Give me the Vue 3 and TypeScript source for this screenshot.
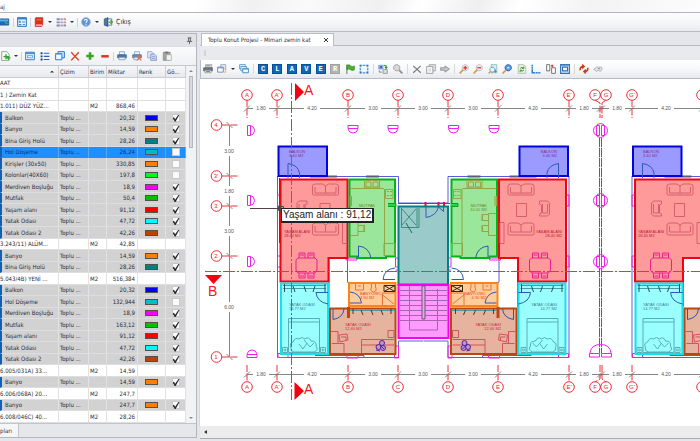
<script setup lang="ts">
import { ref } from 'vue'

type Shape = [d: string, fill?: string, stroke?: string, width?: number]

interface Row {
  name: string
  amount?: string
  color?: string
  on?: boolean
  unit?: string
}

const icons: Record<string, Shape[]> = {
  monitor: [['M-6 3H14V13H-6Z', '#1c6db8', '#174f86'], ['M-6 4H13V7H-6Z', '#5fb0e6'], ['M8 8L12 11', 'none', '#5cba3c', 2]],
  app: [['M1 1H15V15H1Z', '#e6f1fb', '#2f77b8', 1.6], ['M1 1H15V4H1Z', '#3a86c8'], ['M3 6H6V9H3Z M3 11H7V13H3Z', '#3a86c8'], ['M8 8H13M9 12H13', 'none', '#3a86c8', 1.4]],
  book: [['M3 1H14V12L12 15H2V2Z', '#dc2f17', '#a81f10'], ['M3 12H13V14H3Z', '#f5d9d0'], ['M4 3H12V6H4Z', '#f0563a']],
  grid: [['M1 2H6V5H1Z M1 7H6V10H1Z M1 12H6V15H1Z', '#7d8bb5'], ['M7 2H11V5H7Z M7 7H11V10H7Z M7 12H11V15H7Z', '#b3a3bf'], ['M12 2H16V5H12Z M12 7H16V10H12Z', '#cf8e94'], ['M12 12H16V15H12Z', '#7d8bb5']],
  help: [['M8 1A7 7 0 1 1 7.9 1Z', '#5b93d6', '#9fb9dc', 1.4], ['M5.5 6Q6 3.5 8.5 4Q11 5 9 7.5Q8 8.500 8 10M8 11.500V13', 'none', '#fff', 1.8]],
  door: [['M2 3L8 1V15L2 13Z', '#54759f', '#2b4768'], ['M8 3H14V13H8Z', '#fff', '#3f5f85', 1.2], ['M9 8H15M12 5L15 8L12 11', 'none', '#3fa535', 2]],
  addDoc: [['M1 1H9L13 5V15H1Z', '#f4faf4', '#6d9c74', 1.2], ['M8 5V13M4 9H12M9 11H15M12 8V14', 'none', '#35a335', 2.2]],
  window: [['M1 2H15V14H1Z', '#f7fbff', '#3e7cc0', 1.6], ['M1 2H15V5H1Z', '#4f8fd0'], ['M4 7H12V11H4Z', '#dcebfa', '#3e7cc0', 1]],
  list: [['M1 2H4V5H1Z M1 7H4V10H1Z M1 12H4V15H1Z', '#1d3f73'], ['M6 3.500H15M6 8.500H15M6 13.500H15', 'none', '#2e66ad', 1.8]],
  copies: [['M5 1H15V11H5Z', '#cfe5fa', '#2d7cc9', 1.6], ['M1 4H11V14H1Z', '#f6fbff', '#2d7cc9', 1.6], ['M1 4H11V6H1Z', '#5ea3e0']],
  cross: [['M2 2L14 15M14 2L2 15', 'none', '#df3a1d', 2.2]],
  plus: [['M8 2V14M2 8H14', 'none', '#36a51e', 4]],
  minus: [['M2 8.500H14', 'none', '#d43a26', 4]],
  print: [['M4 1H12V6H4Z', '#eaf1f8', '#6d87a8'], ['M1 6H15V11H1Z', '#4678ae', '#315b8c'], ['M3 10H13V14H3Z', '#e8f1fa', '#5f81a8']],
  printX: [['M4 1H12V6H4Z', '#eaf1f8', '#7d92ad'], ['M1 6H15V11H1Z', '#6c8cae', '#4b6888'], ['M3 10H10V14H3Z', '#e8f1fa', '#6d87a8'], ['M8 8L15 15M15 8L8 15', 'none', '#e06a55', 2]],
  docs: [['M1 1H8L10 3V11H1Z', '#dfe6f5', '#8da1ce', 1.2], ['M6 5H12L15 8V15H6Z', '#d1dcf4', '#7188c0', 1.2], ['M8 9H13M8 12H13', 'none', '#7188c0', 1]],
  paste: [['M2 2H13V15H2Z', '#a6a29d', '#7e7a76'], ['M5 1H10V4H5Z', '#777'], ['M7 6H15V15H7Z', '#f2f2f2', '#a2a2a2']],
  printer: [['M4 1H14V6H4Z', '#e9edf0', '#888'], ['M1 6H15V11H1Z', '#6f7a86', '#454e58'], ['M3 10H13V14H3Z', '#f3f3f3', '#777'], ['M5 3H12M5 12H11', 'none', '#444', 1]],
  views: [['M6 1H14V8H6Z', '#e3eaf3', '#8b9cb6', 1.2], ['M1 5H10V13H1Z', '#fafcff', '#6b84ac', 1.4], ['M1 5H10V7H1Z', '#7f9ac6'], ['M14 8V13H11', 'none', '#e0b168', 1.4]],
  cascade: [['M1 1H10V8H1Z', '#eaf5ff', '#4b9ad6', 1.4], ['M3 4H12V11H3Z', '#eaf5ff', '#4b9ad6', 1.4], ['M6 7H15V14H6Z', '#fff', '#2c80c4', 1.4], ['M6 7H15V9H6Z', '#55a2dc']],
  flag: [['M3 1V16', 'none', '#5c7a4a', 1.6], ['M3 2Q7 0 9 3Q12 5 15 3V9Q12 12 9 9Q6 7 3 9Z', '#48b02c', '#2c861b']],
  marquee: [['M2 2H14V14H2Z', '#eef6ff', '#75b4e8'], ['M1 1H4V4H1Z M12 1H15V4H12Z M1 12H4V15H1Z M12 12H15V15H12Z M7 1H9V3H7Z M7 13H9V15H7Z M1 7H3V9H1Z M13 7H15V9H13Z', '#2474bf']],
  replace: [['M1 2H8V8H1Z', '#9cbcf0', '#6e92d4'], ['M3 7L5 3L6 7', 'none', '#1a3e91', 1.2], ['M9 2L13 3V6M11 5L13 7L15 5', 'none', '#2f9a2f', 2], ['M8 9H15V15H8Z', '#dedede', '#777'], ['M2 10V13H6', 'none', '#666', 1.2]],
  lens: [['M6 1A5 5 0 1 1 5.900 1Z', '#d9d9d9', '#a2a2a2', 1.6], ['M10 10L15 15', 'none', '#929292', 3]],
  cut: [['M2 3L14 14M14 3L2 14', 'none', '#787878', 1.8]],
  cube: [['M5 1H15V11H5Z', '#e5e5e5', '#989898', 1.2], ['M1 4H11V15H1Z', '#f6f6f6', '#989898', 1.4], ['M4 7H8V12H4Z', '#ddd']],
  arrow: [['M1 6H8V3L15 8L8 13V10H1Z', '#c9c9c9', '#7f7f7f', 1.2]],
  zoomIn: [['M10 1A5 5 0 1 1 9.900 1Z', '#eaeaf0', '#b4b2ba', 1.2], ['M7 9L1 15', 'none', '#cf9b4c', 2.600], ['M10 3V9M7 6H13', 'none', '#d1371e', 2]],
  zoomOut: [['M10 1A5 5 0 1 1 9.900 1Z', '#eaeaf0', '#b4b2ba', 1.2], ['M7 9L1 15', 'none', '#cf9b4c', 2.600], ['M7 6H13', 'none', '#d1371e', 2]],
  zoomPage: [['M5 1H14V14H5Z', '#dbeef2', '#7fb0bb', 1.2], ['M7 5A4 4 0 1 1 6.900 5Z', '#e9f5ff', '#5b92b4', 1.4], ['M4 12L1 15', 'none', '#d0a04e', 2.400], ['M12 9V14M10 12H14', 'none', '#4f9e47', 1.4]],
  zoomFit: [['M10 1A5 5 0 1 1 9.900 1Z', '#5b9ae0', '#2861ac', 1.6], ['M6 10L1 15', 'none', '#cf9b4c', 2.800], ['M8 5H12V7H8Z', '#d9edff']],
  refresh: [['M2 1H10L14 4V15H2Z', '#e8f1e6', '#a6b5a3', 1.2], ['M5 7Q8 4 11 7M11 4V7H8M11 10Q8 13 5 10M5 13V10H8', 'none', '#3aa132', 1.6]],
  axes: [['M2 1V14H15', 'none', '#337fc8', 2.400], ['M1 4H4M1 8H4M7 12V15M11 12V15', 'none', '#fff', 1]],
  swap: [['M1 1H6V11H1Z', '#fff', '#666', 1.4], ['M9 6H15V15H9Z', '#fff', '#666', 1.4], ['M8 3H12M10 1V5', 'none', '#d9392d', 1.8]],
  frame: [['M1 1H15V15H1Z', '#e3f0ff', '#2c6fb8', 1.8], ['M4 5H12V11H4Z', '#fff', '#2c6fb8', 1.8], ['M1 1H15V3H1Z', '#5793d2']],
  turn: [['M2 10Q1 4 7 4M5 1L8 4L5 7', 'none', '#cc3d12', 2.600], ['M14 6Q15 12 9 12M11 9L8 12L11 15', 'none', '#cc3d12', 2.600]],
  hand: [['M1 8L6 5L14 5Q16 8 12 12L8 10L5 12Z', '#e4e4e4', '#a5a5a5', 1.2], ['M8 7.500H11', 'none', '#888', 1.6]]
}

const mainTools = ['monitor', 'app', 'book', 'grid', 'help']
const tableTools = [['addDoc'], ['window', 'list', 'copies', 'cross', 'plus', 'minus'], ['print', 'printX', 'docs', 'paste']]
const planTools = [
  ['printer', 'views', 'cascade'],
  ['#C', '#L', '#A', '#V', '#E', '#R', 'flag', 'marquee'],
  ['replace', 'lens'],
  ['cut', 'cube', 'arrow'],
  ['zoomIn', 'zoomOut', 'zoomPage', 'zoomFit', 'refresh', 'axes', 'swap', 'frame'],
  ['turn', 'hand']
]

const item = (name: string, amount: string, color: string, on = true): Row => ({ name, amount, color, on })
const rows = ref<Row[]>([
  { name: 'AAT' },
  { name: '1 ) Zemin Kat' },
  { name: '1.011) DÜZ YÜZ...', unit: 'M2', amount: '868,46' },
  item('Balkon', '20,32', '#0000f0'),
  item('Banyo', '14,59', '#ff8000'),
  item('Bina Giriş Holü', '28,26', '#008080'),
  item('Hol Döşeme', '26,24', '#00b8c0', false),
  item('Kirişler (30x50)', '330,85', '#ff8000', false),
  item('Kolonlar(40X60)', '197,8', '#00f818', false),
  item('Merdiven Boşluğu', '18,9', '#f800f8'),
  item('Mutfak', '50,4', '#00c000'),
  item('Yaşam alanı', '91,12', '#fa0000'),
  item('Yatak Odası', '47,72', '#00f8ff'),
  item('Yatak Odası 2', '42,26', '#bd4200'),
  { name: '3.243/11) ALÜM...', unit: 'M2', amount: '42,85' },
  item('Banyo', '14,59', '#ff8000'),
  item('Bina Giriş Holü', '28,26', '#008080'),
  { name: '5.043/4B) YENİ ...', unit: 'M2', amount: '516,384' },
  item('Balkon', '20,32', '#0000f0'),
  item('Hol Döşeme', '132,944', '#00c0c0', false),
  item('Merdiven Boşluğu', '18,9', '#f800f8'),
  item('Mutfak', '163,12', '#00c000'),
  item('Yaşam alanı', '91,12', '#fa0000'),
  item('Yatak Odası', '47,72', '#00f8ff'),
  item('Yatak Odası 2', '42,26', '#bd4200'),
  { name: '6.005/031A) 33...', unit: 'M2', amount: '14,59' },
  item('Banyo', '14,59', '#ff8000'),
  { name: '6.006/068A) 20...', unit: 'M2', amount: '247,7' },
  item('Banyo', '247,7', '#ff8000'),
  { name: '6.008/046C) 40...', unit: 'M2', amount: '28,26' }
])
const selected = ref(6)

const axes = [
  { n: 'A', x: 247, c: 247 }, { n: "A'", x: 277, c: 277 }, { n: 'B', x: 348, c: 348 },
  { n: 'C', x: 398, c: 398 }, { n: 'D', x: 448, c: 448 }, { n: 'E', x: 498, c: 498 },
  { n: "E'", x: 569, c: 569 }, { n: 'F', x: 600, c: 595 }, { n: 'G', x: 602, c: 606 },
  { n: "G'", x: 632, c: 632 }, { n: '', x: 702, c: 702 }
]
const spans = [
  { x: 261, t: '1.80' }, { x: 312, t: '4.20' }, { x: 373, t: '3.00' }, { x: 423, t: '3.00' }, { x: 473, t: '3.00' },
  { x: 533, t: '4.20' }, { x: 584, t: '1.80' }, { x: 617, t: '1.80' }, { x: 666, t: '4.20' }
]
const levels = [{ n: '4', y: 125 }, { n: "3'", y: 176 }, { n: '3', y: 206 }, { n: '2', y: 256 }, { n: '1', y: 357 }]
const rises = [{ y: 151, t: '3.00' }, { y: 191, t: '1.80' }, { y: 231, t: '3.00' }, { y: 307, t: '6.00' }]

const units = ['', 'translate(846.5 0) scale(-1 1)', 'translate(354.5 0)']
const rooms = [
  { a: 'BALKON', b: '3.40 M2', x: 289, y: 153, c: '#8a2a90' },
  { a: 'YAŞAM ALANI', b: '28.40 M2', x: 284, y: 233, c: '#b81838' },
  { a: 'MUTFAK', b: '10.20 M2', x: 359, y: 207, c: '#6d8a20' },
  { a: 'YATAK ODASI', b: '14.77 M2', x: 289, y: 306, c: '#3b7c88' },
  { a: 'BANYO/WC', b: '4.90 M2', x: 360, y: 295, c: '#e0482c' },
  { a: 'YATAK ODASI', b: '12.40 M2', x: 345, y: 326, c: '#d02840' }
]
const roomLabels = [
  ...rooms.map(r => ({ ...r, b: r.a === 'MUTFAK' ? '' : r.b, anchor: 'start' })),
  ...rooms.map(r => ({ ...r, x: 846 - r.x, anchor: 'end' })),
  ...rooms.map(r => ({ ...r, x: r.x + 354, anchor: 'start' })).filter(r => r.x < 690)
]
</script>

<template>
  <div class="app">
    <header class="ribbon"><span>aj</span></header>
    <div class="main-tools" role="toolbar" aria-label="Proje">
      <template v-for="(t, i) in mainTools" :key="t">
        <button class="tool" type="button" :aria-label="t">
          <svg viewBox="0 0 16 16"><path v-for="(s, k) in icons[t]" :key="k" :d="s[0]" :fill="s[1]" :stroke="s[2]" :stroke-width="s[3]" /></svg>
        </button>
        <i v-if="i > 1" class="drop"></i>
        <i v-if="i !== 2 && i !== 4" class="sep"></i>
      </template>
      <button class="exit" type="button">
        <svg viewBox="0 0 16 16"><path v-for="(s, k) in icons.door" :key="k" :d="s[0]" :fill="s[1]" :stroke="s[2]" :stroke-width="s[3]" /></svg>
        Çıkış
      </button>
    </div>

    <div class="work">
      <aside class="side">
        <div class="side-head">
          <svg class="pin" viewBox="0 0 8 8"><path d="M2 1H6M3 1V5M5 1V5M1 5H7M4 5V8" fill="none" stroke="#555" /></svg>
        </div>
        <div class="side-tools" role="toolbar" aria-label="Metraj">
          <template v-for="(g, i) in tableTools" :key="i">
            <div class="group">
              <button v-for="t in g" :key="t" class="tool" type="button" :aria-label="t">
                <svg viewBox="0 0 16 16"><path v-for="(s, k) in icons[t]" :key="k" :d="s[0]" :fill="s[1]" :stroke="s[2]" :stroke-width="s[3]" /></svg>
              </button>
              <i v-if="i === 0" class="drop"></i>
            </div>
            <i v-if="i < 2" class="sep"></i>
          </template>
        </div>
        <div class="table-area">
          <table>
            <colgroup><col /><col class="c-draw" /><col class="c-unit" /><col class="c-amount" /><col class="c-color" /><col class="c-show" /></colgroup>
            <thead>
              <tr><th><span class="sort"></span></th><th>Çizim</th><th>Birim</th><th>Miktar</th><th>Renk</th><th>Gö...</th></tr>
            </thead>
            <tbody>
              <tr v-for="(r, i) in rows" :key="i" :class="{ item: r.color, selected: i === selected }" @click="selected = i">
                <td class="name">{{ r.name }}</td>
                <td>{{ r.color ? 'Toplu ...' : '' }}</td>
                <td>{{ r.unit }}</td>
                <td class="num">{{ r.amount }}</td>
                <td class="mid"><span v-if="r.color" class="swatch" :style="{ background: r.color }"></span></td>
                <td class="mid"><input v-if="r.color" v-model="r.on" type="checkbox" :aria-label="r.name" /></td>
              </tr>
            </tbody>
          </table>
          <div class="vbar"><i class="up"></i><i class="thumb"></i><i class="down"></i></div>
        </div>
        <div class="side-tabs"><button type="button">pları</button></div>
      </aside>

      <main class="doc">
        <div class="tabs">
          <div class="tab">Toplu Konut Projesi - Mimari zemin kat
            <button type="button" aria-label="Kapat"><svg viewBox="0 0 6 6"><path d="M1 1L5 5M5 1L1 5" fill="none" stroke="#333" /></svg></button>
          </div>
        </div>
        <div class="grip"><i></i></div>
        <div class="plan-tools" role="toolbar" aria-label="Çizim">
          <div v-for="(g, i) in planTools" :key="i" class="group">
            <template v-for="t in g" :key="t">
              <button v-if="t[0] === '#'" class="letter" :class="{ off: t === '#R' }" type="button">{{ t[1] }}</button>
              <button v-else class="tool" type="button" :aria-label="t">
                <svg viewBox="0 0 16 16"><path v-for="(s, k) in icons[t]" :key="k" :d="s[0]" :fill="s[1]" :stroke="s[2]" :stroke-width="s[3]" /></svg>
              </button>
              <i v-if="t === 'views'" class="drop"></i>
            </template>
          </div>
        </div>

        <div class="canvas">
          <svg class="plan" viewBox="200 79 500 347" preserveAspectRatio="xMinYMin meet">
            <!-- axis bubbles and dimension chains -->
            <g class="dim">
              <path d="M247 108.500H700M247 374.500H700M229.500 125V357" />
              <path v-for="a in axes" :key="a.n" :d="`M${a.x - 3} 111.500L${a.x + 3} 105.500M${a.x - 3} 377.500L${a.x + 3} 371.500`" />
              <path v-for="l in levels" :key="l.n" :d="`M226.500 ${l.y - 3}L232.500 ${l.y + 3}`" />
            </g>
            <g v-for="s in spans" :key="s.x" class="dim-text">
              <rect :x="s.x - 8" y="105" width="16" height="7" /><text :x="s.x" y="110">{{ s.t }}</text>
              <rect :x="s.x - 8" y="371" width="16" height="7" /><text :x="s.x" y="376">{{ s.t }}</text>
            </g>
            <g v-for="r in rises" :key="r.y" class="dim-text">
              <rect x="223" :y="r.y - 5" width="13" height="10" /><text x="229" :y="r.y + 2">{{ r.t }}</text>
            </g>
            <g v-for="a in axes" :key="a.n" class="axis">
              <path :d="`M${a.c} 100L${a.x} 103V118M${a.x} 365V379L${a.c} 382`" stroke-dasharray="7 1.500" />
              <circle :cx="a.c" cy="95" r="5.300" /><text :x="a.c" y="97">{{ a.n }}</text>
              <circle :cx="a.c" cy="387" r="5.300" /><text :x="a.c" y="389">{{ a.n }}</text>
            </g>
            <g v-for="l in levels" :key="l.n" class="axis">
              <circle cx="216.500" :cy="l.y" r="5.300" /><text x="216" :y="l.y + 2">{{ l.n }}</text>
              <path :d="`M222 ${l.y}H239`" stroke-dasharray="7 1.500" />
            </g>

            <!-- shaft between the two blocks -->
            <path d="M599.500 137V353M601.500 137V353" fill="none" stroke="#5058d0" />
            <path d="M600.500 137V353" fill="none" stroke="#fff" stroke-width="2.500" stroke-dasharray="1 9" />

            <g class="vent">
              <template v-for="y in [130.5, 200.5, 261.5]" :key="y">
                <path :d="`M247.500 ${y - 5}h3v10h-3zM250.500 ${y - 5}q4 1 4 5t-4 5`" />
                <path :d="`M596.500 ${y - 5}h3v10h-3zM601.500 ${y - 5}h3v10h-3zM596 ${y - 5}q-2.500 2-2.500 5t2.500 5M605 ${y - 5}q2.500 2 2.500 5t-2.500 5M597 ${y - 6}q3.500-2 7 0M597 ${y + 6}q3.500 2 7 0`" />
              </template>
              <path v-for="x in [353, 393, 453.5, 494]" :key="x" :d="`M${x - 5} 125.500h10v3h-10zM${x - 5} 129q1 4 5 4t5-4`" />
              <path d="M247 354.500h10v3h-10zM247 354q1-4 5-4t5 4" />
              <path d="M589.500 353.500h10v3.500h-10zM601.500 353.500h10v3.500h-10zM590 353Q591 344.500 600.500 344.500T611 353" />
            </g>

            <!-- apartment, drawn once and repeated -->
            <g v-for="(u, i) in units" :key="i" :transform="u">
              <path class="wall" d="M277.500 176V357.500H398.500V341H423M327 176.500H398.500V203H423M347.500 282V259M329 259V307M347.500 282.500H396M315 355.500H364V358" />
              <path d="M310 176.500H337M366 176.500H379" stroke="#5b5b78" stroke-width="2" />
              <path class="vent-line" d="M277.500 195h3v11h-3zM277.500 256h3v11h-3zM278 353.500h10v4h-10zM347 354h11v4h-11zM394.500 346h4v12h-4zM395.500 258h3v9h-3zM346 258h11v2h-11zM395.500 270h3v10" />

              <rect x="278.500" y="146.500" width="48.500" height="29.500" fill="#9a9aff" stroke="#0004e0" stroke-width="2" />
              <path d="M280.500 179.500H347.500V258H328.500V281.500H280.500Z" fill="#ff9a9a" stroke="#ee0514" stroke-width="2" />
              <path d="M349.500 179.500H395V256.500H386V258H357V256.500H349.500Z" fill="#9ae69a" stroke="#00b41a" stroke-width="2" />
              <rect x="281" y="283.500" width="47" height="70.500" fill="#9affff" stroke="#12dff0" stroke-width="2" />
              <rect x="349" y="283" width="46.500" height="23" fill="#ffcc9a" stroke="#ff8412" stroke-width="2" />
              <rect x="330" y="308.500" width="65.500" height="45.500" fill="#e5b39e" stroke="#b84810" stroke-width="2" />
              <path d="M347 307h3v11h-3z" fill="#b84810" />

              <g class="doors">
                <path d="M288 178V163.500Q298 165 299.500 173V178" />
                <path d="M358.500 257V246Q369 247 371 258" />
                <path d="M383 279.500H395M383 279.500Q384 269 395 268" />
                <path d="M316 292.500H328M316 292.500Q317 302 328 304" />
                <path d="M350 303H361.500Q360 293 350 292" />
                <path d="M333 309V319.500Q343 318 344 309" />
              </g>

              <g class="soft">
                <path d="M312.500 186q0-2 3-2h7l3 2 3-2h7q3 0 3 2v8q0 1-2 1h-22q-2 0-2-1zM315 187v6h21v-6M325.500 186v7M312.500 225q0-2 3-2h7l3 2 3-2h7q3 0 3 2v9q0 1-2 1h-22q-2 0-2-1zM315 226v6h21v-6M325.500 225v7" />
                <path d="M320 203.500h10v13h-10zM297 203l2-2h8v3l-2 1v8l2 1v2h-8l-2-2zM299 204v9h5v-9M342.500 222.500h4v21h-4z" />
              </g>
              <g class="pink">
                <path d="M298 258h17l2 2v10l-2 3h-17l-2-3v-10zM299 258v-5h6v5M308 258v-5h6v5M299 273v5h6v-5M308 273v5h6v-5M300 255h4M309 255h4M300 276h4M309 276h4" />
              </g>
              <g class="counter">
                <path d="M384.500 189V255M350 188.500H384M364.500 180.500h15v7.500h-15zM366 182h5v5h-5zM373 182h5v5h-5zM385.500 189.500h7.500v9h-7.500zM384 243.500h11v12h-11z" />
                <path d="M387 191.500h2M390 191.500h2M387 195.500h2M390 195.500h2" />
                <path d="M350 213.500h8v22h-8M358 214.500h6v6h-6M358 225.500h6v6h-6M364.500 214v7M364.500 225v7" stroke="#8240a0" />
                <path d="M350 196v10M351.500 196v10" stroke="#5d608f" />
              </g>
              <g class="bath">
                <path d="M355.500 284v6h8v-6M358 286h3M371.500 284v3q-2 4 2 5 4-1 2-5v-3M382.500 295L394 304M382.500 293h12M382.500 293v12" />
                <path d="M384 285.500h11v6h-11zM384 285.500l11 6M395 285.500l-11 6" class="ink" />
              </g>
              <g class="wardrobe">
                <path d="M283 285.500H326M283 288.500H326M350 310.500H395" />
                <path class="hanger" d="M284.500 284v8M293 286l2 6M304 286l2 6M315 286l-2 6M325 284v8" />
                <path class="hanger brown" d="M353 309v5M361 310l2 5M371 310l2 5M381 310l2 5M391 309v5" />
              </g>
              <g class="bed">
                <path d="M288.500 318.500h31v34h-31zM288.500 322h31M291 348q-2-5 2-6 2-5 6-3 3-3 6 0 4-3 6 2 6 0 5 5 3 4-2 6h-20q-4-1-3-4M299 344l4 5 4-6M304 340l6 7 4-4M282.500 347.500h5v5h-5zM320.500 347.500h5v5h-5z" />
                <circle cx="285" cy="350" r="1" /><circle cx="323" cy="350" r="1" />
              </g>
              <g class="study">
                <path d="M331 331.500h7v12M339 335l8-1 1 6-8 2zM341 337h5v3M332 343.500h12v10M361.500 353V339.500H394M361.500 345H394M388 330.500h6v7h-6z" />
                <g stroke="#5a20a0" fill="#b89acb"><circle cx="382" cy="343" r="2.500" /><circle cx="378.500" cy="347" r="2.500" /><circle cx="383" cy="348" r="2.500" /><path d="M376 350l4 1M380 345l4 4" /></g>
              </g>
            </g>

            <!-- shared hall and stairs -->
            <rect x="398.500" y="206.500" width="49.500" height="78" fill="#9acaca" stroke="#077e82" stroke-width="2" />
            <rect x="398.500" y="285" width="50" height="53" fill="#ff9aff" stroke="#f500f5" stroke-width="2" />
            <path d="M400 290.500H447M400 295.500H447M400 300.500H447M400 305.500H447M400 310.500H447M400 315.500H447M400 320.500H447M409.500 286V330H437.500V289" fill="none" stroke="#a765ad" />
            <path d="M422 286h3v33h-3z" fill="#dcaee0" stroke="#7d4b86" />
            <g fill="none" stroke="#3d917c">
              <path d="M401.500 208V227.500H419V208M402 209L416 225M416 209L402 225M417 208V227" /><path d="M406 223l6 10" stroke="#246868" />
            </g>
            <path d="M426 206V217.500Q436 216 438.500 207L443.500 211.500V206" fill="none" stroke="#3160b0" />
            <path d="M398 203.500H450" stroke="#4848c8" />
            <path d="M388 203.500h8v3h-8M451 203.500h7v3h-7" fill="#2fd04a" stroke="#00a820" />
            <path d="M425.500 202v4M438.500 202v4M444 202v4" stroke="#e01040" stroke-width="2" />

            <text v-for="(r, k) in roomLabels" :key="k" class="room" :fill="r.c" :text-anchor="r.anchor" :y="r.y">
              <tspan :x="r.x">{{ r.a }}</tspan>
              <tspan v-if="r.b" :x="r.x" dy="4">{{ r.b }}</tspan>
            </text>

            <!-- section marks -->
            <path class="cut-line" d="M291.500 83V400M205 271.500H700" />
            <path d="M295 83L304 92L295 101ZM294.500 382L304 391L294.500 400ZM205 275H222L213.500 284Z" fill="#f40010" />
            <g class="section"><text x="304" y="95">A</text><text x="304" y="394">A</text><text x="208" y="296">B</text></g>
            <path d="M250 208.500H281M279.500 178V243M278.500 206.500h5v4h-5z" fill="none" stroke="#54404a" />
          </svg>
          <div class="tip" role="tooltip">Yaşam alanı : 91,12</div>
        </div>
        <div class="hbar"><i></i></div>
      </main>
    </div>
  </div>
</template>

<style>
body { background: #e4e6eb; }
</style>

<style scoped>
.app {
  display: flex;
  flex-direction: column;
  min-height: 100vh;
  background: #e4e6eb;
  color: #2b2b33;
  font: 6px/10px "DejaVu Sans Condensed", "DejaVu Sans", sans-serif;
  overflow: hidden;
}
* { box-sizing: border-box; }
button {
  padding: 0;
  border: 0;
  background: none;
  color: inherit;
  font: inherit;
}
svg { display: block; }
.ribbon {
  height: 13px;
  padding-top: 2px;
  border-bottom: 1px solid #b4b5b9;
  background: linear-gradient(115deg, #fff 0 28%, #f1f1f1 36%, #fafafa 44%, #f0f0f0 54%, #fff 60%, #efefef 68%, #fff 74%, #f3f3f3 84%, #fcfcfc);
}
.main-tools {
  display: flex;
  align-items: center;
  gap: 4px;
  height: 19px;
  border-bottom: 1px solid #b9bcc6;
  background: linear-gradient(#fdfdfe, #f6f7f9 50%, #e9ebef);
}
.tool { flex: none; width: 10px; height: 10px; }
.tool svg, .exit svg { width: 10px; height: 10px; }
.drop {
  width: 4px;
  height: 2px;
  background: #333;
  clip-path: polygon(0 0, 100% 0, 50% 100%);
}
.sep { width: 1px; height: 9px; margin: 0 -1px; background: #cfd2d9; }
.exit { display: flex; align-items: center; gap: 3px; font-size: 7px; }

.work { display: flex; flex: 1; gap: 3px; }
.side {
  display: flex;
  flex-direction: column;
  flex: none;
  width: 197px;
  margin: 1px 0 3px;
  border: solid #b3b6bf;
  border-width: 1px 1px 1px 0;
  background: #edeff2;
}
.side-head {
  display: flex;
  justify-content: flex-end;
  height: 13px;
  padding: 3px 3px 0;
  border-bottom: 1px solid #dcdee3;
  background: #e0e2e7;
}
.pin { width: 7px; height: 7px; }
.side-tools {
  display: flex;
  align-items: center;
  gap: 4px;
  height: 18px;
  padding-left: 1px;
  background: linear-gradient(#fcfcfd, #eef0f3);
}
.group { display: flex; align-items: center; gap: 5px; }
.side-tools .group:first-child { gap: 3px; }
.table-area { display: flex; flex: 1; border-top: 1px solid #c6c8ce; background: #fff; }
table { flex: 1; width: 186px; table-layout: fixed; border-collapse: separate; border-spacing: 0; align-self: flex-start; }
.c-draw { width: 30px; }
.c-unit { width: 18px; }
.c-amount { width: 31px; }
.c-color { width: 28px; }
.c-show { width: 20px; }
th {
  height: 12px;
  padding: 0 1px;
  border-right: 1px solid #cbcdd3;
  border-bottom: 1px solid #cbcdd3;
  background: linear-gradient(#f6f7f9, #e7e9ed);
  font-weight: 400;
  text-align: left;
  line-height: 9px;
}
.sort {
  display: block;
  width: 4px;
  height: 2px;
  margin: 0 3px 0 auto;
  background: #333;
  clip-path: polygon(50% 0, 100% 100%, 0 100%);
}
td {
  height: 11px;
  padding: 0 1px;
  border-right: 1px solid #e2e2e4;
  border-bottom: 1px solid #dedee0;
  line-height: 10px;
  overflow: hidden;
  white-space: nowrap;
}
tr:nth-child(even) td { height: 12px; }
.name { padding-left: 0; }
.item td { background: #d2d2d3; }
.item .name { padding-left: 3px; border-left: 2px solid #1260b4; }
.selected td { background: #1e8fff; border-bottom-color: #1e8fff; border-right-color: #58aaff; color: #123058; }
.num { padding-right: 2px; text-align: right; }
.mid { text-align: center; line-height: 0; }
.swatch {
  display: inline-block;
  width: 13px;
  height: 6px;
  border: 1px solid #54504a;
}
input {
  appearance: none;
  display: inline-grid;
  width: 8px;
  height: 8px;
  margin: 0;
  border: 1px solid #c9c9cc;
  background: #fafafa;
  vertical-align: middle;
}
input:checked::after {
  content: "";
  width: 7px;
  height: 7px;
  background: #26262c;
  clip-path: polygon(0 50%, 20% 40%, 38% 68%, 85% 0, 100% 0, 45% 100%, 32% 100%);
}
.vbar {
  display: flex;
  flex-direction: column;
  align-items: center;
  width: 10px;
  padding: 4px 0;
  background: #f1f2f4;
}
.up, .down { width: 4px; height: 2px; background: #888; clip-path: polygon(50% 0, 100% 100%, 0 100%); }
.down { margin-top: auto; transform: rotate(180deg); }
.thumb { width: 4px; height: 72px; margin-top: 4px; border: 1px solid #b6b8bf; background: #d9dadf; }
.side-tabs { height: 14px; border-top: 1px solid #c3c5cc; background: #e5e7eb; }
.side-tabs button { width: 19px; height: 13px; border-right: 1px solid #c3c5cc; background: #f5f6f8; text-align: left; }

.doc { display: flex; flex: 1; flex-direction: column; min-width: 0; margin-bottom: 2px; border-bottom: 1px solid #a9acb4; }
.tabs { height: 14px; padding: 1px 0 0 1px; border-bottom: 1px solid #b8bbc4; }
.tab {
  display: flex;
  align-items: center;
  justify-content: space-between;
  width: 133px;
  height: 13px;
  padding: 0 4px 0 6px;
  border: 1px solid #b8bbc4;
  border-bottom: 0;
  background: #fff;
  white-space: nowrap;
}
.tab svg { width: 6px; height: 6px; }
.grip { height: 14px; padding: 4px; background: #e9eaee; }
.grip i { display: block; width: 2px; height: 6px; background: #d3d5da; }
.plan-tools {
  display: grid;
  grid-template-columns: 50px 120px 34px 47px 120px auto;
  align-items: center;
  height: 19px;
  padding-left: 2px;
  border: solid #b9bcc5;
  border-width: 0 0 1px 1px;
  background: linear-gradient(#fff, #f7f8fa 50%, #e6e9ed);
}
.plan-tools .group { justify-content: space-between; padding-right: 4px; gap: 0; }
.plan-tools .group + .group { padding-left: 4px; border-left: 1px solid #d6d8dd; }
.plan-tools .group:last-child { justify-content: flex-start; gap: 4px; }
.letter {
  width: 10px;
  height: 10px;
  border: 1px solid #0c4f94;
  background: #1266b6;
  color: #fff;
  font: bold 7px/8px "Liberation Mono", monospace;
  text-align: center;
}
.letter.off { border-color: #a2a2a2; background: #b3b3b3; }
.canvas { position: relative; flex: 1; background: #fff; border-left: 1px solid #d5d7dc; margin-left: -1px; }
.plan { width: 100%; }
.tip {
  position: absolute;
  left: 81px;
  top: 129px;
  padding: 0 1px;
  border: 1px solid #222;
  border-width: 1px 2px 2px 1px;
  background: #fff;
  color: #222;
  font: 10px/12px "Liberation Sans", Arial, sans-serif;
}
.hbar { height: 12px; padding: 4px; background: #ececed; }
.hbar i { display: block; width: 3px; height: 4px; background: #333; clip-path: polygon(100% 0, 100% 100%, 0 50%); }

.plan text { font-family: "Liberation Sans", Arial, sans-serif; }
.dim path { fill: none; stroke: #858585; }
.dim-text rect { fill: #fff; }
.dim-text text { fill: #555; font-size: 5px; text-anchor: middle; }
.axis path, .axis circle { fill: none; stroke: #ec3038; }
.axis text { fill: #e32831; font-size: 6px; text-anchor: middle; }
.vent path, .vent-line { fill: none; stroke: #f01cf0; }
.wall { fill: none; stroke: #5c5cda; }
.doors path { fill: none; stroke: #2e58b4; }
.soft path { fill: none; stroke: #d4606c; }
.pink path { fill: none; stroke: #ea1f92; }
.counter path { fill: none; stroke: #93a544; }
.bath path { fill: none; stroke: #e8703c; }
.bath .ink { stroke: #302818; }
.wardrobe path { fill: none; stroke: #4a9ca6; }
.wardrobe .hanger { stroke: #28525a; }
.wardrobe .brown { stroke: #5d3525; }
.bed path, .bed circle { fill: none; stroke: #58aeb8; }
.study > path { fill: none; stroke: #d55360; }
.room { font-size: 4px; }
.cut-line { fill: none; stroke: #d83c46; stroke-dasharray: 12 2 2 2; }
.section { fill: #f01820; font-size: 14px; }
</style>
